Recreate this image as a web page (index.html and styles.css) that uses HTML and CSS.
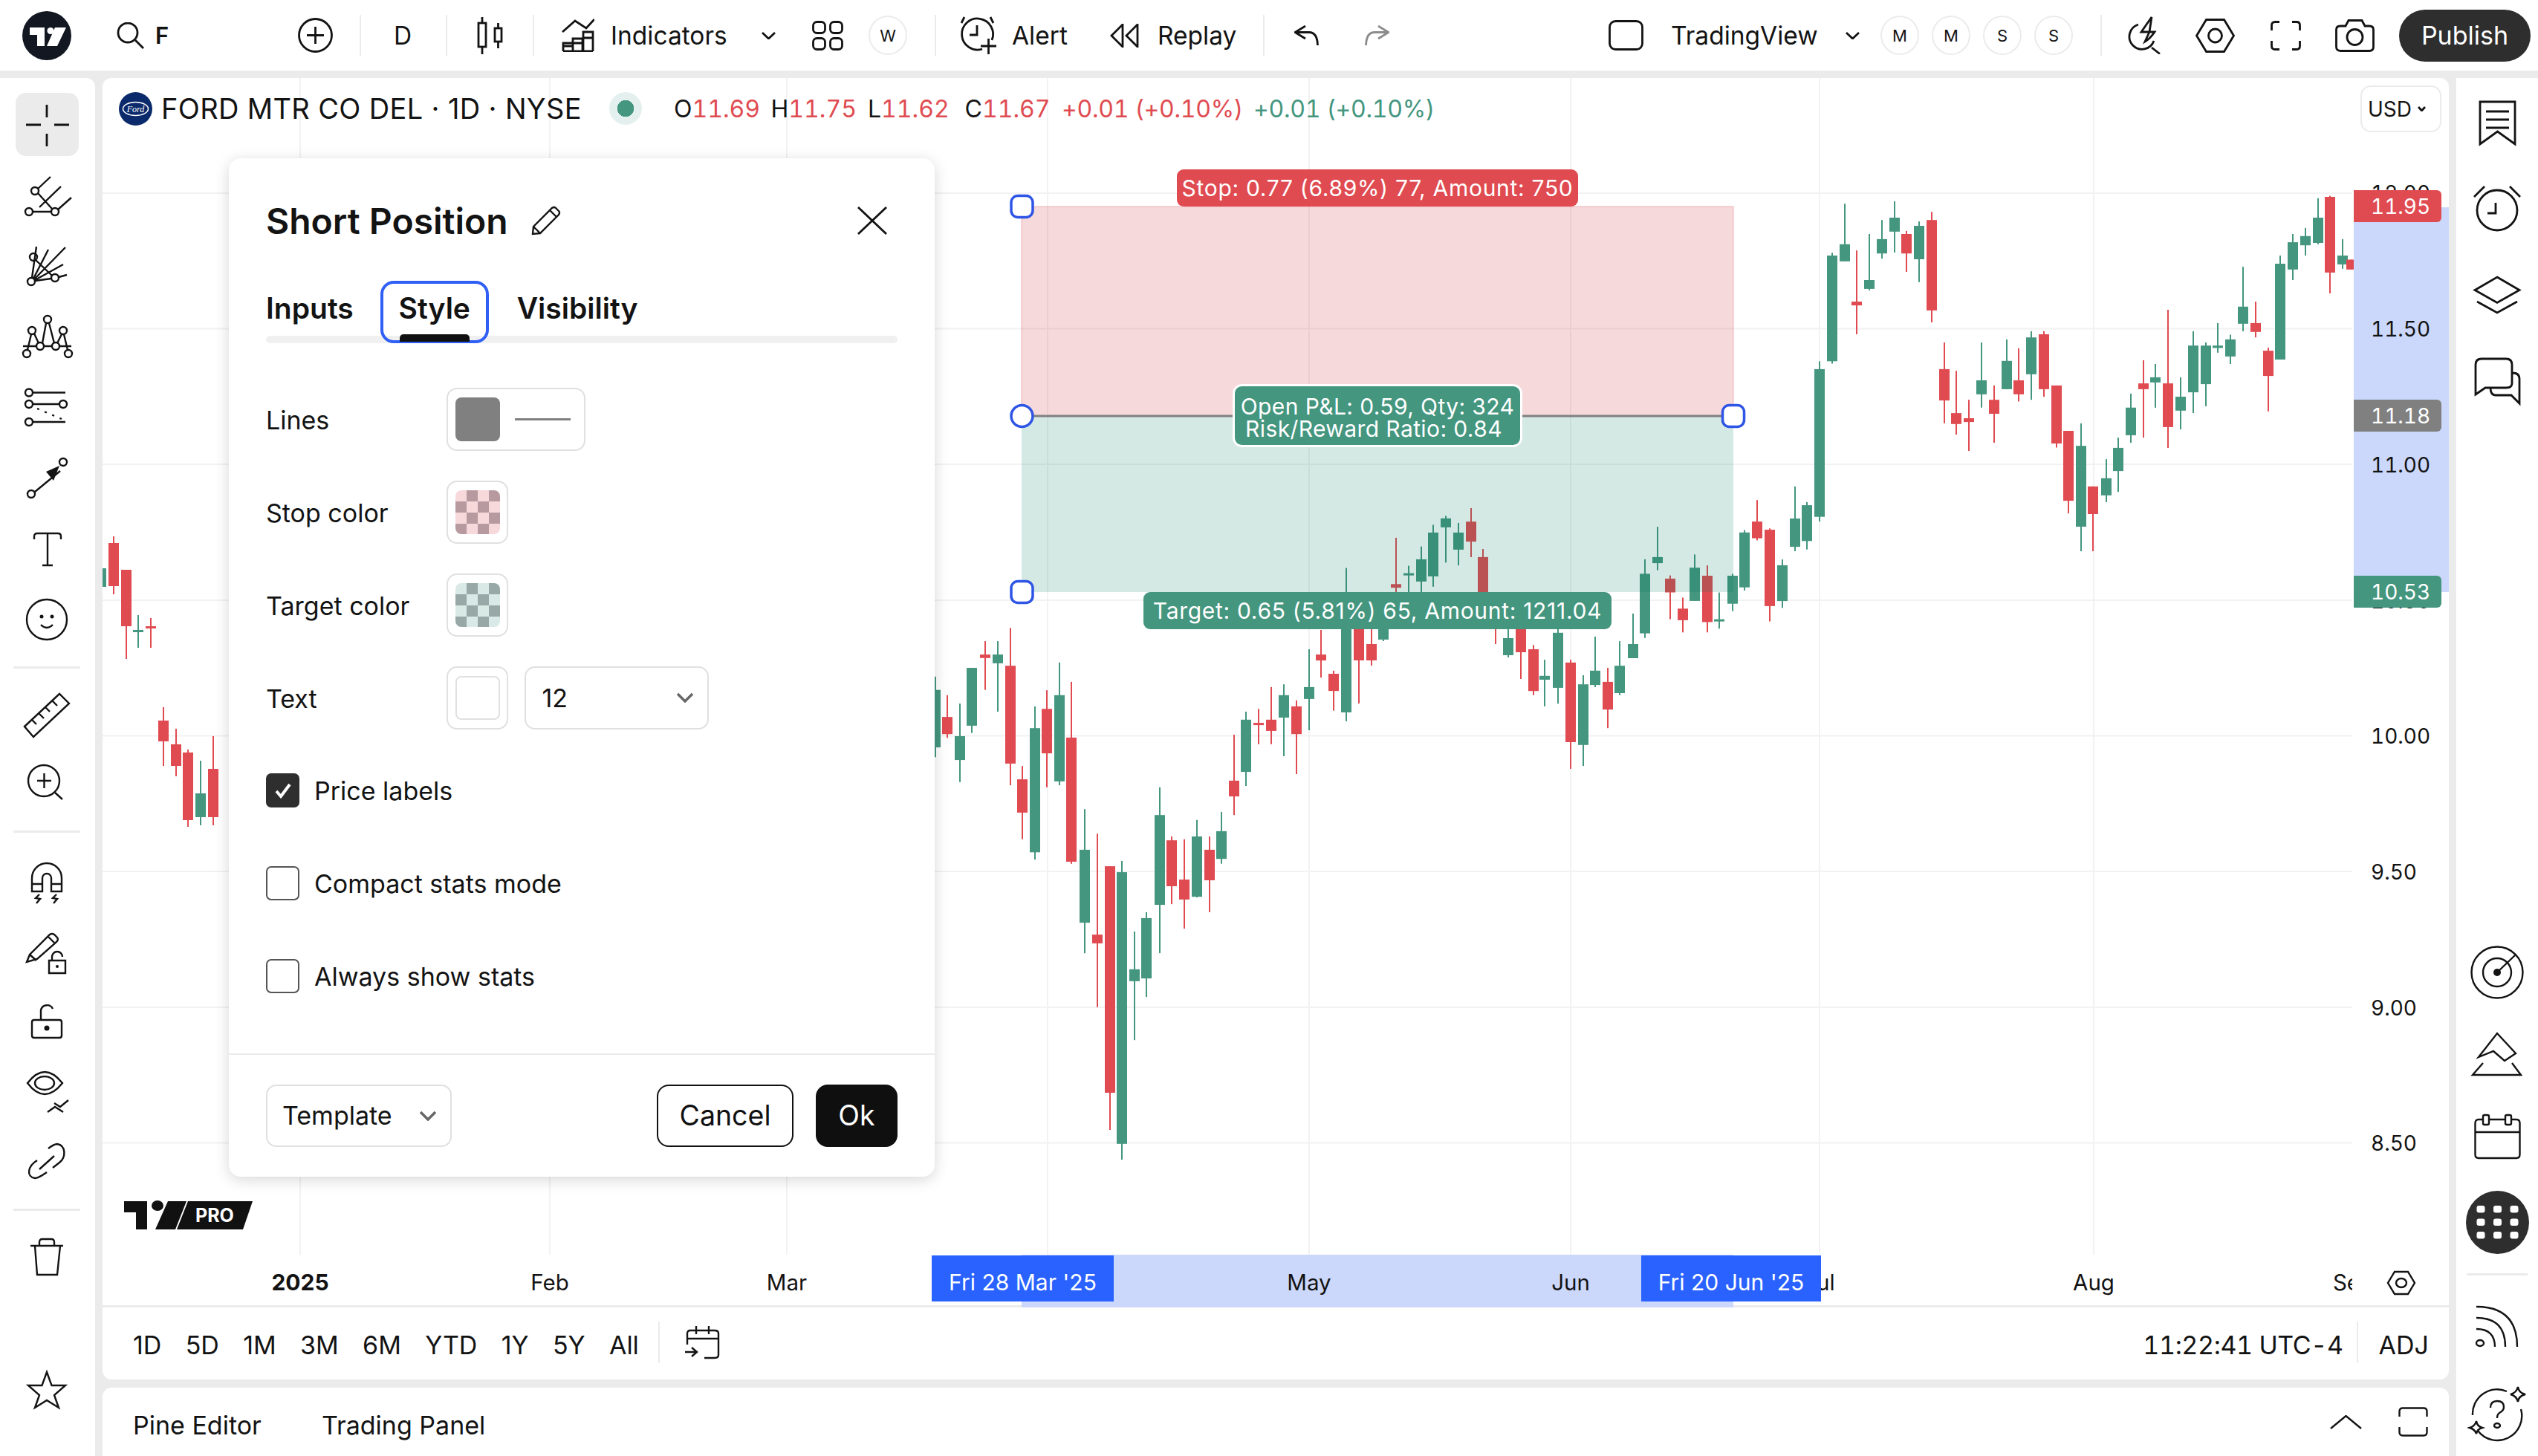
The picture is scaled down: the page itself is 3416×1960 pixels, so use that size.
FILE: index.html
```html
<!DOCTYPE html>
<html lang="en">
<head>
<meta charset="utf-8">
<title>Short Position - TradingView</title>
<link rel="stylesheet" href="styles.css">
</head>
<body>
<div class="app">
  <header class="topbar">
    <svg class="t-logo" width="66" height="66" viewBox="0 0 66 66"><circle cx="33" cy="33" r="33" fill="#131722"/><path d="M10 22H30V47H20V32H10Z M44 22H59L47 47H33Z" fill="#fff"/><circle cx="38" cy="26.5" r="4.5" fill="#fff"/></svg>
    <svg class="ic t-search" width="38" height="36" viewBox="0 0 38 36"><circle cx="15" cy="14" r="13"/><path d="M25 24L36 35"/></svg>
    <span class="t-f">F</span>
    <svg class="ic t-plus" width="47" height="47" viewBox="0 0 47 47"><circle cx="23.5" cy="23.5" r="22"/><path d="M12 23.5H35M23.5 12V35"/></svg>
    <i class="vsep t-s1"></i>
    <span class="tb-text t-d">D</span>
    <i class="vsep t-s2"></i>
    <svg class="ic t-candle" width="36" height="50" viewBox="0 0 36 50"><rect x="2" y="8" width="10" height="32"/><path d="M7 0V8M7 40V50M28.500 8V15M28.500 33V42"/><rect x="24" y="15" width="9" height="18"/></svg>
    <i class="vsep t-s3"></i>
    <svg class="ic t-ind" width="44" height="45" viewBox="0 0 44 45"><path d="M1 18L18 3L33 13L44 1M2 44V33H15V44M15 44V27H28V44M29 44V18H42V44M2 44H42M2 37H15M15 33H28M29 26H42"/></svg>
    <span class="tb-text t-indt">Indicators</span>
    <svg class="ic t-ch1" width="19" height="10" viewBox="0 0 19 10"><path d="M1 1L9.500 9L18 1"/></svg>
    <svg class="ic t-grid" width="42" height="40" viewBox="0 0 42 40"><rect x="1.500" y="1.500" width="16" height="15" rx="5"/><rect x="24.500" y="1.500" width="16" height="15" rx="5"/><rect x="1.500" y="23.500" width="16" height="15" rx="5"/><rect x="24.500" y="23.500" width="16" height="15" rx="5"/></svg>
    <span class="round-pill t-w">W</span>
    <i class="vsep t-s4"></i>
    <svg class="ic t-alert" width="51" height="51" viewBox="0 0 51 51"><path d="M31 44A21 21 0 1 1 44 32M24 12V25H14M3 9L7 1M42 1L46 9M39.500 30V51M29 40H50"/></svg>
    <span class="tb-text t-alertt">Alert</span>
    <svg class="ic t-replay" width="39" height="32" viewBox="0 0 39 32"><path d="M17 1L2 16L17 31ZM37 1L22 16L37 31Z"/></svg>
    <span class="tb-text t-replayt">Replay</span>
    <i class="vsep t-s5"></i>
    <svg class="ic t-undo" width="33" height="27" viewBox="0 0 33 27"><path d="M15 1L1 9.500L15 18M1 9.500H20Q31 9.500 31.500 27"/></svg>
    <svg class="ic ic-muted t-redo" width="33" height="27" viewBox="0 0 33 27"><path d="M18 1L32 9.500L18 18M32 9.500H13Q2 9.500 1.500 27"/></svg>
    <svg class="ic t-square" width="47" height="41" viewBox="0 0 47 41"><rect x="1.500" y="1.500" width="44" height="38" rx="8"/></svg>
    <span class="tb-text t-tv">TradingView</span>
    <svg class="ic t-ch2" width="19" height="10" viewBox="0 0 19 10"><path d="M1 1L9.500 9L18 1"/></svg>
    <span class="round-pill t-m1">M</span>
    <span class="round-pill t-mn">M</span>
    <span class="round-pill t-mn">S</span>
    <span class="round-pill t-mn">S</span>
    <i class="vsep t-s6"></i>
    <svg class="ic t-zap" width="45" height="51" viewBox="0 0 45 51"><path d="M15 11A17 17 0 1 0 36 33M33 42L44 50.500M33 1L19 21H30L24 34Q31 30 37 21H30Z"/></svg>
    <svg class="ic t-hex" width="53" height="46" viewBox="0 0 53 46"><path d="M14.500 1.500H38.500L51.500 23L38.500 44.500H14.500L1.500 23Z"/><circle cx="26.500" cy="23" r="9"/></svg>
    <svg class="ic t-full" width="41" height="40" viewBox="0 0 41 40"><path d="M1.500 13V6Q1.500 1.500 6 1.500H12M29 1.500H35Q39.500 1.500 39.500 6V13M39.500 27V34Q39.500 38.500 35 38.500H29M12 38.500H6Q1.500 38.500 1.500 34V27"/></svg>
    <svg class="ic t-cam" width="53" height="44" viewBox="0 0 53 44"><path d="M7 9H14L18 1.500H36L40 9H46Q51.500 9 51.500 14V37Q51.500 42.500 46 42.500H7Q1.500 42.500 1.500 37V14Q1.500 9 7 9Z"/><circle cx="26.500" cy="24" r="10.500"/></svg>
    <button class="publish">Publish</button>
  </header>

  <div class="main">
    <aside class="left-tools">
      <div class="tool-group">
        <div class="tool tool-active"><svg class="ic" width="80" height="70" viewBox="0 0 80 70"><path d="M40 8V25M40 47V64M12 35H32M50 35H70"/></svg></div>
        <div class="tool"><svg class="ic ic-thin" width="80" height="70" viewBox="0 0 80 70"><circle cx="24" cy="29" r="5"/><circle cx="16" cy="57" r="5"/><circle cx="51" cy="57" r="5"/><path d="M21 57H46M28 32L47 53M28 26L45 10M30 51L59 23M55 54L73 38"/></svg></div>
        <div class="tool"><svg class="ic ic-thin" width="80" height="70" viewBox="0 0 80 70"><circle cx="19" cy="56" r="5"/><circle cx="22" cy="23" r="5"/><circle cx="51" cy="51" r="5"/><path d="M20 51L26 9M22 52L42 13M23 53L65 10M24 54L62 33M24 55L46 52M56 50L67 47M25 27L47 48"/></svg></div>
        <div class="tool"><svg class="ic ic-thin" width="80" height="70" viewBox="0 0 80 70"><circle cx="13" cy="58" r="5"/><circle cx="20" cy="27" r="5"/><circle cx="31" cy="48" r="5"/><circle cx="41" cy="12" r="5"/><circle cx="52" cy="48" r="5"/><circle cx="62" cy="27" r="5"/><circle cx="69" cy="58" r="5"/><path d="M8 48H26M36 48H47M57 48H73M14 53L19 32M23 31L29 44M34 44L39 17M43 17L50 44M54 44L60 32M63 32L68 53"/></svg></div>
        <div class="tool"><svg class="ic ic-thin" width="80" height="70" viewBox="0 0 80 70"><circle cx="16" cy="14.500" r="5"/><circle cx="16" cy="30" r="5"/><circle cx="62" cy="30" r="5"/><circle cx="16" cy="54" r="5"/><path d="M21 14.500H65M21 30H57M21 54H65"/><path class="dash-part" d="M27 36L60 50"/></svg></div>
        <div class="tool"><svg class="ic ic-thin" width="80" height="70" viewBox="0 0 80 70"><circle cx="19" cy="56" r="5"/><circle cx="62" cy="13" r="5"/><path d="M24 53L58 25"/><path class="ic-solid" d="M39 26L57 18L49 38Z"/></svg></div>
        <div class="tool"><svg class="ic ic-thin" width="80" height="70" viewBox="0 0 80 70"><path d="M23 22V18Q23 14 27 14H55Q59 14 59 18V22M41 14V57M34 57H48"/></svg></div>
        <div class="tool"><svg class="ic ic-thin" width="80" height="70" viewBox="0 0 80 70"><circle cx="40" cy="35" r="27"/><circle class="ic-solid" cx="33" cy="31" r="2.500"/><circle class="ic-solid" cx="47" cy="31" r="2.500"/><path d="M32 42Q40 50 48 42"/></svg></div>
      </div>
      <hr class="tool-sep tool-sep-a">
      <div class="tool-group">
        <div class="tool tool-s"><svg class="ic ic-thin" width="80" height="70" viewBox="0 0 80 70"><path d="M10 50L57 6L70 19L22 64ZM20 41L26 47M29 32L36 39M38 24L44 30M47 15L54 22"/></svg></div>
        <div class="tool tool-s"><svg class="ic ic-thin" width="80" height="70" viewBox="0 0 80 70"><circle cx="36" cy="35" r="21"/><path d="M27 35H46M36.500 25V45M51 51L61 60"/></svg></div>
      </div>
      <hr class="tool-sep tool-sep-b">
      <div class="tool-group">
        <div class="tool tool-m"><svg class="ic ic-thin" width="80" height="70" viewBox="0 0 80 70"><path d="M20 46V28A20 20 0 0 1 60 28V46H46V28A6 6 0 0 0 34 28V46ZM20 36H34M46 36H60M30 50L25 55L31 56L26 62M53 50L48 55L54 56L49 62"/></svg></div>
        <div class="tool tool-m"><svg class="ic ic-thin" width="80" height="70" viewBox="0 0 80 70"><path d="M13 48L17 38L44 11Q47 9 50 11L54 15Q56 18 53 21L27 44ZM17 38L26 46M42 14L51 23"/><path d="M43 46H65V63H43ZM47 46V41A7 7 0 0 1 61 41"/><circle class="ic-solid" cx="54" cy="54" r="2"/></svg></div>
        <div class="tool tool-m tool-up"><svg class="ic ic-thin" width="80" height="70" viewBox="0 0 80 70"><path d="M23 35H57Q60 35 60 38V56Q60 59 57 59H23Q20 59 20 56V38Q20 35 23 35ZM32 35V22A8.500 8.500 0 0 1 48 20"/><circle class="ic-solid" cx="40" cy="46" r="3.500"/></svg></div>
        <div class="tool tool-m tool-up"><svg class="ic ic-thin" width="80" height="70" viewBox="0 0 80 70"><path d="M14 26Q37 -4 61 26Q37 56 14 26Z"/><ellipse cx="37" cy="26" rx="13" ry="9"/><path d="M41 65L51 58L62 65M50 53L58 58L69 49"/></svg></div>
        <div class="tool tool-m"><svg class="ic ic-thin" width="80" height="70" viewBox="0 0 80 70"><path d="M27 34C14 42 12 56 24 58C29 58 34 54 40 50M48 44L57 37C66 30 66 14 54 12C50 12 46 15 42 18M30 46L50 28"/></svg></div>
      </div>
      <hr class="tool-sep tool-sep-c">
      <div class="tool"><svg class="ic ic-thin" width="80" height="70" viewBox="0 0 80 70"><path d="M18 18H62M24 18L27 57H54L58 18M30 18V13Q30 9 34 9H46Q50 9 50 13V18"/></svg></div>
      <div class="tool tool-bottom"><svg class="ic ic-thin" width="80" height="70" viewBox="0 0 80 70"><path d="M40 12L46.500 30L65 30L50 43L56 60L40 50L24 60L30 43L15 30L33.500 30Z"/></svg></div>
    </aside>

    <div class="center">
      <section class="chart">
        <div class="pane">
          <svg class="chart-svg" width="3158" height="1655" viewBox="138 105 3158 1655">
            <defs>
              <clipPath id="candle-clip"><rect x="138" y="105" width="3030" height="1584"/></clipPath>
              <clipPath id="axis-clip"><rect x="138" y="1689" width="3028" height="71"/></clipPath>
            </defs>
            <g class="grid">
              <path d="M404 105V1689M740 105V1689M1059 105V1689M1410 105V1689M1762 105V1689M2114 105V1689M2449 105V1689M2818 105V1689"/>
              <path d="M138 260H3166M138 442.600H3166M138 625H3166M138 808H3166M138 990.600H3166M138 1173H3166M138 1356H3166M138 1538.600H3166"/>
            </g>
            <g id="candles" clip-path="url(#candle-clip)"></g>

            <rect class="zone-stop" x="1375" y="278" width="958" height="282"/>
            <rect class="zone-target" x="1375" y="560" width="958" height="237"/>
            <path class="zone-line" d="M1375 560H2333"/>

            <rect class="handle" x="1361" y="263.500" width="29" height="29" rx="9"/>
            <rect class="handle" x="1361" y="545.500" width="29" height="29" rx="14.500"/>
            <rect class="handle" x="1361" y="782.500" width="29" height="29" rx="9"/>
            <rect class="handle" x="2318.500" y="545.500" width="29" height="29" rx="9"/>

            <rect class="tag-red" x="1584" y="228" width="540" height="50" rx="9"/>
            <text class="tag-text" x="1854" y="264">Stop: 0.77 (6.89%) 77, Amount: 750</text>
            <rect class="tag-green tag-border" x="1660.500" y="518.500" width="387" height="82" rx="11"/>
            <text class="tag-text tag-tight" x="1854" y="558">Open P&amp;L: 0.59, Qty: 324</text>
            <text class="tag-text tag-tight" x="1849" y="588">Risk/Reward Ratio: 0.84</text>
            <rect class="tag-green" x="1539" y="797" width="630" height="50" rx="9"/>
            <text class="tag-text" x="1854" y="833">Target: 0.65 (5.81%) 65, Amount: 1211.04</text>

            <g class="price-axis">
              <rect class="band" x="3168" y="279" width="128" height="518"/>
              <text x="3191" y="270">12.00</text>
              <text x="3191" y="453">11.50</text>
              <text x="3191" y="636">11.00</text>
              <text x="3191" y="819">10.50</text>
              <text x="3191" y="1001">10.00</text>
              <text x="3191" y="1184">9.50</text>
              <text x="3191" y="1367">9.00</text>
              <text x="3191" y="1549">8.50</text>
              <path class="pl-red" d="M3168 256H3280A6 6 0 0 1 3286 262V293A6 6 0 0 1 3280 299H3168Z"/>
              <text class="pl-text" x="3191" y="288">11.95</text>
              <path class="pl-gray" d="M3168 538H3280A6 6 0 0 1 3286 544V575A6 6 0 0 1 3280 581H3168Z"/>
              <text class="pl-text" x="3191" y="570">11.18</text>
              <path class="pl-green" d="M3168 775H3280A6 6 0 0 1 3286 781V812A6 6 0 0 1 3280 818H3168Z"/>
              <text class="pl-text" x="3191" y="807">10.53</text>
            </g>

            <g class="pro-logo">
              <path d="M167 1617H198V1655H183V1632H167Z M226 1617H251L236 1655H209Z M253 1617H340L327 1655H238Z"/>
              <ellipse cx="212" cy="1623" rx="8" ry="7"/>
              <text class="pro-text" x="263" y="1645">PRO</text>
            </g>

            <g class="time-axis">
              <rect class="band" x="1375" y="1689" width="958" height="71"/>
              <g clip-path="url(#axis-clip)">
                <text class="time-strong" x="404" y="1737">2025</text>
                <text x="740" y="1737">Feb</text>
                <text x="1059" y="1737">Mar</text>
                <text x="1762" y="1737">May</text>
                <text x="2114" y="1737">Jun</text>
                <text x="2449" y="1737">Jul</text>
                <text x="2818" y="1737">Aug</text>
                <text x="3167" y="1737">Sep</text>
              </g>
              <rect class="date-tag" x="1254" y="1690" width="245" height="62"/>
              <text class="date-text" x="1376.500" y="1737">Fri 28 Mar '25</text>
              <rect class="date-tag" x="2209" y="1690" width="242" height="62"/>
              <text class="date-text" x="2330" y="1737">Fri 20 Jun '25</text>
            </g>
            <g class="ic ic-thin">
              <path d="M3223 1712H3241L3250 1727L3241 1742H3223L3214 1727Z"/>
              <ellipse cx="3232" cy="1727" rx="7" ry="6"/>
            </g>
          </svg>

          <div class="legend">
            <svg class="ford" width="45" height="45" viewBox="0 0 45 45"><circle cx="22.500" cy="22.500" r="22.500" fill="#0b2a6b"/><ellipse cx="22.500" cy="22.500" rx="17" ry="9" fill="none" stroke="#fff" stroke-width="1.500"/><text class="ford-text" x="22.500" y="27">Ford</text></svg>
            <span class="legend-title">FORD MTR CO DEL · 1D · NYSE</span>
            <span class="status-dot"></span>
            <div class="ohlc">
              <span class="ohlc-item">O<b>11.69</b></span>
              <span class="ohlc-item">H<b>11.75</b></span>
              <span class="ohlc-item">L<b>11.62</b></span>
              <span class="ohlc-item">C<b>11.67</b></span>
              <span class="delta delta-red">+0.01 (+0.10%)</span>
              <span class="delta delta-green">+0.01 (+0.10%)</span>
            </div>
          </div>

          <div class="currency">USD<svg class="ic" width="11" height="7" viewBox="0 0 11 7"><path d="M1 1L5.500 6L10 1"/></svg></div>

          <div class="dialog">
            <div class="dlg-head">
              <h2 class="dlg-title">Short Position</h2>
              <svg class="ic ic-thin dlg-pencil" width="40" height="40" viewBox="0 0 40 40"><path d="M2 38L3 28L28 3Q31 1 33 3L37 7Q39 9 37 12L12 37ZM3 28L12 37M25 6L34 15"/></svg>
              <svg class="ic dlg-close" width="40" height="38" viewBox="0 0 40 38"><path d="M1 1L39 37M39 1L1 37"/></svg>
            </div>
            <div class="tabs">
              <span class="tab">Inputs</span>
              <span class="tab tab-active">Style</span>
              <span class="tab">Visibility</span>
            </div>
            <div class="form">
              <div class="row">
                <span class="row-label">Lines</span>
                <div class="ctl ctl-lines"><span class="swatch swatch-gray"></span><span class="line-sample"></span></div>
              </div>
              <div class="row">
                <span class="row-label">Stop color</span>
                <div class="ctl ctl-sq"><span class="swatch check-stop"></span></div>
              </div>
              <div class="row">
                <span class="row-label">Target color</span>
                <div class="ctl ctl-sq"><span class="swatch check-target"></span></div>
              </div>
              <div class="row">
                <span class="row-label">Text</span>
                <div class="ctl ctl-sq"><span class="swatch swatch-white"></span></div>
                <div class="ctl ctl-select"><span>12</span><svg class="chev-gray" width="24" height="14" viewBox="0 0 24 14"><path d="M2 2L12 12L22 2"/></svg></div>
              </div>
              <label class="row row-check"><span class="cb cb-on"><svg width="24" height="22" viewBox="0 0 24 22"><path d="M3 12L9 19L21 3"/></svg></span>Price labels</label>
              <label class="row row-check"><span class="cb"></span>Compact stats mode</label>
              <label class="row row-check"><span class="cb"></span>Always show stats</label>
            </div>
            <div class="dlg-foot">
              <div class="ctl ctl-template"><span>Template</span><svg class="chev-gray" width="24" height="14" viewBox="0 0 24 14"><path d="M2 2L12 12L22 2"/></svg></div>
              <button class="btn btn-cancel">Cancel</button>
              <button class="btn btn-ok">Ok</button>
            </div>
          </div>
        </div>

        <div class="rangebar">
          <span class="range">1D</span><span class="range">5D</span><span class="range">1M</span><span class="range">3M</span><span class="range">6M</span><span class="range">YTD</span><span class="range">1Y</span><span class="range">5Y</span><span class="range">All</span>
          <i class="bar-sep"></i>
          <svg class="ic ic-thin r-cal" width="49" height="46" viewBox="0 0 49 46"><path d="M4 26V11Q4 7 8 7H41Q46 7 46 11V40Q46 44 41 44H27M4 18H46M16 1V12M33 1V12M1 36H16M10 30L17 36L10 42"/></svg>
          <span class="r-clock">11:22:41 UTC-4</span>
          <i class="bar-sep r-sep2"></i>
          <span class="r-adj">ADJ</span>
        </div>
      </section>

      <section class="bottom-panel">
        <span class="bp-tab">Pine Editor</span>
        <span class="bp-tab bp-tab2">Trading Panel</span>
        <svg class="ic ic-thin bp-up" width="43" height="19" viewBox="0 0 43 19"><path d="M1 18L21.500 1L42 18"/></svg>
        <svg class="ic ic-thin bp-max" width="40" height="40" viewBox="0 0 40 40"><path d="M1.500 13V6Q1.500 1.500 6 1.500H34Q38.500 1.500 38.500 6V13M38.500 27V34Q38.500 38.500 34 38.500H6Q1.500 38.500 1.500 34V27"/></svg>
      </section>
    </div>

    <aside class="right-tools">
      <div class="rtool"><svg class="ic" width="80" height="80" viewBox="0 0 80 80"><path d="M17 12H64V69L40.500 52L17 69ZM25 25H56M25 36H56M25 47H56"/></svg></div>
      <div class="rtool"><svg class="ic" width="80" height="80" viewBox="0 0 80 80"><circle cx="40" cy="42" r="27"/><path d="M38 32V46H27M9 24L23 10M71 24L57 10"/></svg></div>
      <div class="rtool"><svg class="ic" width="80" height="80" viewBox="0 0 80 80"><path d="M40 16L70 33.500L40 50.500L10 33.500ZM13 49L40 64L67 49"/></svg></div>
      <div class="rtool"><svg class="ic" width="80" height="80" viewBox="0 0 80 80"><path d="M11 58V18Q11 10 19 10H52Q60 10 60 18V43Q60 49 52 49H24ZM61 29Q70 29 70 37V70L59 59H38Q31 59 31 49"/></svg></div>
      <div class="rtool rtool-b rtool-first"><svg class="ic ic-thin" width="80" height="80" viewBox="0 0 80 80"><circle cx="40" cy="40" r="34.500"/><circle cx="40" cy="40" r="19"/><circle class="ic-solid" cx="40" cy="40" r="5"/><path d="M40 40L65 16"/></svg></div>
      <div class="rtool rtool-b"><svg class="ic ic-thin" width="80" height="80" viewBox="0 0 80 80"><path d="M40 12L65 39L50 49L35 36L15 44ZM21 52L7 68H72L60 52"/></svg></div>
      <div class="rtool rtool-b"><svg class="ic ic-thin" width="80" height="80" viewBox="0 0 80 80"><path d="M21 18H15Q10.500 18 10.500 23V65Q10.500 70 15 70H66Q70.500 70 70.500 65V23Q70.500 18 66 18H59M29 18H51M10.500 35H70.500"/><rect x="21" y="12" width="8" height="13" rx="2"/><rect x="51" y="12" width="8" height="13" rx="2"/></svg></div>
      <div class="rtool rtool-b rtool-apps"><svg width="85" height="85" viewBox="0 0 85 85"><circle cx="42.500" cy="42.500" r="42.500" fill="#2e2e2e"/><g fill="#fff"><rect x="14.500" y="20" width="11" height="9.500" rx="3"/><rect x="37" y="20" width="11" height="9.500" rx="3"/><rect x="59.500" y="20" width="11" height="9.500" rx="3"/><rect x="14.500" y="37.500" width="11" height="9.500" rx="3"/><rect x="37" y="37.500" width="11" height="9.500" rx="3"/><rect x="59.500" y="37.500" width="11" height="9.500" rx="3"/><rect x="14.500" y="55" width="11" height="9.500" rx="3"/><rect x="37" y="55" width="11" height="9.500" rx="3"/><rect x="59.500" y="55" width="11" height="9.500" rx="3"/></g></svg></div>
      <hr class="tool-sep rtool-sep">
      <div class="rtool rtool-b"><svg class="ic ic-thin" width="80" height="80" viewBox="0 0 80 80"><path d="M12 14Q67 14 67 68M12 29Q51 29 51 68M12 44Q37 44 37 68"/><ellipse cx="17" cy="63" rx="5" ry="4"/></svg></div>
      <div class="rtool rtool-last"><svg class="ic ic-thin" width="80" height="80" viewBox="0 0 80 80"><path d="M53 12A33 33 0 0 0 7 44M14 65A33 33 0 0 0 72 36M31 34Q31 25 40 25Q49 25 49 33Q49 38 43 41Q40 43 40 48"/><ellipse cx="40" cy="58" rx="4" ry="3"/><path d="M68 6Q69 14 78 16Q69 18 68 26Q66 18 58 16Q66 14 68 6ZM12 52Q13 59 20 61Q13 63 12 69Q10 63 3 61Q10 59 12 52Z"/></svg></div>
    </aside>
  </div>
</div>
<script src="chart.js"></script>
</body>
</html>
```

FILE: styles.css
```css
* { box-sizing: border-box; }
html, body { margin: 0; padding: 0; }
body {
  width: 3416px;
  height: 1960px;
  overflow: hidden;
  background: #ebebeb;
  color: #131313;
  font-family: Inter, "Noto Sans", sans-serif;
}
.app { display: flex; flex-direction: column; height: 100%; }

/* icons */
.ic { fill: none; stroke: #131313; stroke-width: 2.8; display: block; flex: none; }
.ic-thin { stroke-width: 2.4; }
.ic-muted { stroke: #8c8c8c; }
.ic-solid { fill: #131313; stroke: none; }
.dash-part { stroke-width: 2.4; stroke-dasharray: 3 8; }

/* top bar */
.topbar {
  height: 95px;
  flex: none;
  background: #fff;
  display: flex;
  align-items: center;
  padding-left: 30px;
}
.tb-text { font-size: 33.500px; white-space: nowrap; flex: none; }
.vsep { display: block; width: 2px; height: 55px; background: #ebebeb; flex: none; }
.round-pill {
  width: 52px; height: 53px; border: 2px solid #ebebeb; border-radius: 50%;
  display: flex; align-items: center; justify-content: center;
  font-size: 22px; flex: none;
}
.t-search { margin-left: 61px; }
.t-f { margin-left: 14px; width: 18px; font-size: 31px; font-weight: 600; flex: none; }
.t-plus { margin-left: 174px; }
.t-s1 { margin-left: 36px; }
.t-d { width: 112px; text-align: center; }
.t-s2 { margin-left: 2px; }
.t-candle { margin-left: 40px; }
.t-s3 { margin-left: 39px; }
.t-ind { margin-left: 37px; }
.t-indt { margin-left: 22px; width: 157px; }
.t-ch1 { margin-left: 46px; }
.t-grid { margin-left: 49px; }
.t-w { margin-left: 34px; }
.t-s4 { margin-left: 37px; }
.t-alert { margin-left: 31px; }
.t-alertt { margin-left: 20px; width: 76px; }
.t-replay { margin-left: 56px; }
.t-replayt { margin-left: 25px; width: 106px; }
.t-s5 { margin-left: 36px; }
.t-undo { margin-left: 40px; }
.t-redo { margin-left: 62px; }
.t-square { margin-left: 295px; }
.t-tv { margin-left: 37px; width: 199px; }
.t-ch2 { margin-left: 36px; }
.t-m1 { margin-left: 28px; }
.t-mn { margin-left: 17px; }
.t-s6 { margin-left: 37px; }
.t-zap { margin-left: 34px; }
.t-hex { margin-left: 47px; }
.t-full { margin-left: 48px; }
.t-cam { margin-left: 46px; }
.publish {
  margin-left: 33px; width: 177px; height: 70px; flex: none;
  border: 0; border-radius: 35px; background: #2e2e2e; color: #fff;
  font: 34px Inter, "Noto Sans", sans-serif; padding: 0;
}

/* main frame */
.main { flex: 1; min-height: 0; display: flex; margin-top: 10px; }
.left-tools {
  width: 128px; flex: none; background: #fff; border-top-right-radius: 12px;
  display: flex; flex-direction: column; align-items: center; padding: 20px 2px 42px 0;
}
.tool-group { display: flex; flex-direction: column; align-items: center; }
.tool { width: 85px; height: 95.300px; flex: none; display: flex; align-items: center; justify-content: center; }
.tool-s { height: 88px; }
.tool-m { height: 93.500px; }
.tool-up svg { margin-top: -5px; }
.tool-active { height: 85px; margin: 0 0 5px; background: #ebebeb; border-radius: 14px; }
.tool-sep { border: 0; height: 3px; width: 90px; margin: 0; background: #ebebeb; flex: none; }
.tool-sep-a { margin-top: 15px; margin-bottom: 19px; }
.tool-sep-b { margin-top: 23px; margin-bottom: 21px; }
.tool-sep-c { margin-top: 17px; margin-bottom: 17px; }
.tool-bottom { margin-top: auto; }

.center { flex: 1; min-width: 0; margin: 0 10px; display: flex; flex-direction: column; gap: 11px; }
.chart {
  height: 1752px; flex: none; background: #fff; overflow: hidden;
  border-radius: 12px; display: flex; flex-direction: column;
}
.pane { position: relative; height: 1655px; flex: none; border-bottom: 3px solid #ebebeb; }
.chart-svg { display: block; }

/* svg chart */
.grid path { fill: none; stroke: #f2f2f2; stroke-width: 2; }
.zone-stop { fill: rgba(194, 30, 41, .17); stroke: rgba(224, 74, 80, .18); stroke-width: 2; }
.zone-target { fill: rgba(0, 120, 95, .17); }
.zone-line { stroke: #808080; stroke-width: 3; fill: none; }
.handle { fill: #fff; stroke: #2e55e6; stroke-width: 3.500; }
.tag-red { fill: #e04b51; }
.tag-green { fill: #44967f; }
.tag-border { stroke: #fff; stroke-width: 3; }
.tag-text { fill: #fff; font-size: 30px; text-anchor: middle; letter-spacing: .7px; }
.tag-tight { letter-spacing: .4px; }
.price-axis text { font-size: 28px; text-anchor: start; fill: #131313; font-variant-numeric: tabular-nums; }
.price-axis .pl-text { fill: #fff; }
.band { fill: #cbd8fb; }
.pl-red { fill: #e04b51; }
.pl-gray { fill: #808080; }
.pl-green { fill: #44967f; }
.pro-logo path, .pro-logo ellipse { fill: #111; }
.pro-logo .pro-text { fill: #fff; font-size: 25px; font-weight: 700; }
.time-axis text { font-size: 29.500px; text-anchor: middle; fill: #131313; }
.time-axis .time-strong { font-size: 30px; font-weight: 700; }
.date-tag { fill: #2962ff; }
.time-axis .date-text { fill: #fff; font-size: 30px; }

/* legend */
.legend { position: absolute; left: 22px; top: 18px; display: flex; align-items: center; white-space: nowrap; }
.ford { display: block; flex: none; }
.ford-text { fill: #fff; font: italic 12px "Liberation Serif", serif; text-anchor: middle; }
.legend-title { margin-left: 12px; width: 565px; font-size: 38px; letter-spacing: .35px; flex: none; }
.status-dot {
  margin-left: 38px; width: 44px; height: 44px; border-radius: 50%; flex: none;
  background: radial-gradient(circle, #44967f 0 11px, #e3f0ee 11.500px);
}
.ohlc { margin-left: 43px; display: flex; font-size: 32px; font-variant-numeric: tabular-nums; }
.ohlc-item { width: 130.500px; flex: none; }
.ohlc-item b { font-weight: 400; color: #e04b51; }
.delta { width: 258px; flex: none; letter-spacing: -.3px; }
.delta-red { color: #e04b51; }
.delta-green { color: #44967f; }

.currency {
  position: absolute; right: 10px; top: 10px; width: 109px; height: 63px;
  display: flex; align-items: center; padding-left: 8px; gap: 8px;
  background: #fff; border: 2px solid #ebebeb; border-radius: 14px; font-size: 28px;
}

/* dialog */
.dialog {
  position: absolute; left: 170px; top: 108px; width: 950px; height: 1371px;
  background: #fff; border-radius: 16px;
  box-shadow: 0 4px 20px rgba(0, 0, 0, .16);
  display: flex; flex-direction: column;
}
.dlg-head { margin: 44px 64px 0 50px; height: 80px; display: flex; align-items: center; flex: none; }
.dlg-title { margin: 0; font-size: 48px; font-weight: 600; white-space: nowrap; width: 357px; flex: none; }
.dlg-close { margin-left: auto; }
.tabs {
  margin: 41px 50px 0; height: 84px; position: relative; display: flex; align-items: center; flex: none;
}
.tabs::after {
  content: ""; position: absolute; left: 0; right: 0; bottom: 0; height: 10px;
  background: #f0f0f0; border-radius: 5px;
}
.tab { font-size: 39px; font-weight: 600; padding-bottom: 12px; position: relative; z-index: 1; white-space: nowrap; }
.tab-active {
  margin: 0 38px 0 36px; width: 146px; height: 84px; display: flex; align-items: center; justify-content: center;
  border: 4px solid #2f5ff5; border-radius: 18px;
}
.tab-active::after {
  content: ""; position: absolute; left: 22px; right: 22px; bottom: -2px; height: 10px;
  background: #111; border-radius: 5px 5px 0 0;
}
.form { margin: 60px 50px 0; display: flex; flex-direction: column; gap: 40.500px; }
.row { height: 84.500px; display: flex; align-items: center; font-size: 34px; flex: none; }
.row-label { width: 243px; flex: none; padding-top: 3px; }
.ctl { height: 84.500px; border: 2.500px solid #e0e0e0; border-radius: 14px; display: flex; align-items: center; flex: none; }
.ctl-lines { width: 186.500px; padding-left: 10px; }
.ctl-sq { width: 83px; padding-left: 10px; }
.swatch { width: 60px; height: 59px; border-radius: 8px; display: block; flex: none; }
.swatch-gray { background: #808080; }
.swatch-white { background: #fff; border: 2.500px solid #e0e0e0; }
.line-sample { width: 75px; height: 3px; margin-left: 20px; background: #808080; }
.check-stop { background: repeating-conic-gradient(#b79a9f 0 25%, #f7d9dc 0 50%) 0 0 / 30px 30px; }
.check-target { background: repeating-conic-gradient(#97a8a6 0 25%, #d9e9e6 0 50%) 0 0 / 30px 30px; }
.ctl-select { width: 248.500px; margin-left: 21.500px; padding: 0 18px 0 22px; justify-content: space-between; }
.chev-gray { fill: none; stroke: #666; stroke-width: 3.500; display: block; }
.row-check { gap: 20px; }
.cb { width: 45px; height: 46px; border: 2.500px solid #555; border-radius: 7px; flex: none; display: flex; align-items: center; justify-content: center; }
.cb-on { background: #2e2e2e; border-color: #2e2e2e; }
.cb-on path { fill: none; stroke: #fff; stroke-width: 4; }
.dlg-foot {
  margin-top: auto; height: 166px; border-top: 2px solid #ebebeb;
  padding: 39.500px 50px 0; display: flex; align-items: flex-start; flex: none;
}
.ctl-template { width: 249.500px; padding: 0 18px 0 20px; justify-content: space-between; font-size: 34px; }
.btn { height: 84.500px; border-radius: 16px; font: 37.500px Inter, "Noto Sans", sans-serif; padding: 0; }
.btn-cancel { margin-left: auto; width: 184px; background: #fff; border: 2.500px solid #111; color: #111; }
.btn-ok { margin-left: 30px; width: 110px; background: #0f0f0f; border: 0; color: #fff; }

/* range bar */
.rangebar { height: 94px; flex: none; display: flex; align-items: center; padding-left: 41px; font-size: 34px; }
.range { margin-right: 32.300px; padding-top: 7px; white-space: nowrap; }
.bar-sep { display: block; width: 2px; height: 56px; background: #ebebeb; margin-left: -6px; flex: none; }
.r-cal { margin-left: 33px; }
.r-clock { margin-left: auto; padding-top: 7px; white-space: nowrap; letter-spacing: -.4px; font-variant-numeric: tabular-nums; }
.r-sep2 { margin-left: 18px; }
.r-adj { margin-left: 28px; margin-right: 27px; padding-top: 7px; }

/* bottom panel */
.bottom-panel {
  flex: 1; background: #fff; border-radius: 12px 12px 0 0;
  display: flex; align-items: center; padding: 0 28px 0 41px; font-size: 34px;
}
.bp-tab { padding-top: 8px; white-space: nowrap; }
.bp-tab2 { margin-left: 81px; }
.bp-up { margin-left: auto; }
.bp-max { margin-left: 49px; }

/* right toolbar */
.right-tools { width: 110px; flex: none; background: #fff; display: flex; flex-direction: column; align-items: center; padding-top: 2px; }
.rtool { width: 85px; height: 116px; flex: none; display: flex; align-items: center; justify-content: center; }
.rtool-b { height: 110px; }
.rtool-first { margin-top: auto; }
.rtool-apps { margin-top: 6px; }
.rtool-sep { width: 82px; margin: 14px 0 13px; }
.rtool-last { height: 118px; margin-top: 2px; }
```

FILE: chart.js
```js
// Daily candles of the chart. Each row: x, wickTop, bodyTop, bodyBottom, wickBottom, colour ("g" or "r").
var CANDLE_W = 14;
var conv = {
  z9: function (r) { return map(r, 1260, 840, 1.4255, 2.119); },
  z8: function (r) { return map(r, 1260, 200, 1.4255, 2.306); },
  z10: function (r) { return map(r, 2300, 220, 1.405, 2.178); }
};
function map(r, ox, oy, sx, sy) {
  return [ox + r[0] / sx, oy + r[1] / sy, oy + r[2] / sy, oy + r[3] / sy, oy + r[4] / sy, r[5]];
}
var abs = [
  [136,750,765,790,800,"g"],[153,722,731,789,800,"r"],[170,767,767,843,887,"r"],[186,828,848,851,872,"g"],[203,832,843,846,872,"r"],
  [220,952,970,998,1031,"r"],[237,981,1002,1031,1045,"r"],[253,1009,1013,1104,1113,"r"],[270,1024,1068,1100,1111,"g"],[287,991,1035,1100,1111,"r"],
  [1812,764.6,816,959,971,"g"],[1829,815,824,889,947,"r"],[1846,830,867,889,896,"r"],[1862,815,825,861,863,"g"],
  [2013,815,820,840,867,"r"],[2030,840,859,882,885,"g"],[2047,815,825,878,914,"r"],[2198,826,867,886,886,"g"]
];
var z9 = [
  [-2,150,188,352,380,"g"],[22,203,265,314,325,"r"],[45,227,320,388,451,"g"],[69,125,125,290,311,"g"],[94,49,87,97,188,"r"],[118,49,87,112,250,"g"],
  [142,11,119,398,460,"r"],[165,405,443,538,614,"r"],[189,235,297,651,672,"g"],[213,189,242,369,466,"r"],[237,110,203,449,460,"g"],
  [260,165,324,678,684,"r"],[285,528,644,852,939,"g"],[309,598,886,911,1093,"r"],[333,691,691,1337,1443,"r"],[356,676,708,1483,1528,"g"],
  [380,877,985,1019,1187,"g"],[404,822,839,1011,1064,"g"],[429,466,545,801,939,"g"],[452,606,617,748,799,"r"],[476,614,729,786,869,"r"],
  [500,559,606,778,780,"g"],[524,606,644,731,822,"r"],[547,536,591,670,684,"g"],[571,316,447,492,545,"r"],[595,250,273,422,462,"g"],
  [619,242,282,286,343,"r"],[643,180,273,305,343,"r"],[667,172,203,267,377,"g"],[691,218,235,314,428,"r"],[715,72,180,214,303,"g"],
  [739,17,87,104,153,"r"],[762,133,142,191,247,"r"],
  [1146,60,72,191,203,"r"],[1168,102,148,159,235,"g"],[1193,-20,25,182,227,"g"],[1217,102,110,337,413,"r"],[1241,146,172,345,405,"g"],
  [1264,36,133,174,180,"g"],[1288,125,165,244,297,"r"],[1312,49,119,197,203,"g"]
];
var z8 = [
  [883,1208,1352,1363,1400,"r"],[907,1295,1318,1324,1400,"g"],[931,1235,1275,1344,1400,"g"],[954,1168,1192,1328,1360,"g"],[978,1140,1148,1176,1285,"g"],
  [1002,1162,1192,1245,1294,"g"],[1026,1116,1158,1220,1268,"r"],[1049,1243,1268,1400,1410,"r"],
  [1360,1275,1320,1505,1519,"g"],[1384,1174,1268,1287,1309,"g"],[1408,1325,1335,1378,1461,"r"],[1432,1394,1428,1464,1502,"r"],[1455,1260,1301,1404,1404,"g"],
  [1479,1294,1326,1470,1502,"r"],[1503,1378,1461,1465,1490,"g"],[1528,1320,1326,1413,1436,"g"]
];
var z10 = [
  [67,1075,1082,1243,1252,"g"],[91,987,1050,1099,1105,"r"],[115,1070,1074,1298,1343,"r"],[139,1161,1178,1283,1303,"g"],[163,947,1041,1124,1137,"g"],
  [186,993,1002,1107,1132,"g"],[209,580,603,1036,1050,"g"],[233,262,270,580,587,"g"],[257,118,237,287,287,"g"],[280,255,405,416,501,"r"],
  [304,207,342,368,372,"g"],[327,166,222,264,279,"g"],[351,111,159,200,261,"g"],[374,198,207,264,318,"r"],[398,170,183,281,348,"g"],
  [421,142,166,431,466,"r"],[445,525,603,695,762,"r"],[468,608,732,764,795,"r"],[492,693,747,758,843,"r"],[515,525,636,677,716,"g"],
  [539,651,693,734,819,"r"],[563,516,579,662,662,"g"],[586,542,636,677,698,"r"],[610,492,510,618,693,"g"],[633,492,501,662,684,"r"],
  [657,651,651,821,833,"r"],[680,784,784,989,1026,"r"],[704,762,828,1065,1137,"g"],[727,947,947,1028,1137,"r"],[751,867,923,973,993,"g"],
  [774,804,834,902,963,"g"],[798,675,716,797,819,"g"],[822,577,645,662,804,"r"],[845,588,627,642,716,"g"],[868,429,645,773,834,"r"],
  [892,627,684,725,780,"g"],[916,492,534,671,732,"g"],[940,525,534,647,712,"g"],[963,468,534,541,555,"g"],[986,502,516,566,588,"g"],
  [1010,303,420,470,492,"g"],[1034,405,468,494,510,"r"],[1058,540,549,623,727,"r"],[1080,270,294,575,575,"g"],[1104,207,231,311,342,"g"],
  [1128,189,213,240,270,"g"],[1152,102,159,233,237,"g"],[1174,95,98,320,381,"r"],[1198,222,270,296,309,"g"],[1215,282,282,311,311,"r"]
];
var all = abs.concat(z9.map(conv.z9), z8.map(conv.z8), z10.map(conv.z10));
var ns = "http://www.w3.org/2000/svg";
var group = document.getElementById("candles");
function rect(x, y, w, h, fill) {
  var el = document.createElementNS(ns, "rect");
  el.setAttribute("x", x);
  el.setAttribute("y", y.toFixed(1));
  el.setAttribute("width", w);
  el.setAttribute("height", Math.max(h, 3).toFixed(1));
  el.setAttribute("fill", fill);
  group.appendChild(el);
}
all.forEach(function (c) {
  var colour = c[5] === "g" ? "#44967f" : "#e04b51";
  var x = Math.round(c[0]);
  rect(x - 1, c[1], 2, c[4] - c[1], colour);
  rect(x - CANDLE_W / 2, c[2], CANDLE_W, c[3] - c[2], colour);
});
```
